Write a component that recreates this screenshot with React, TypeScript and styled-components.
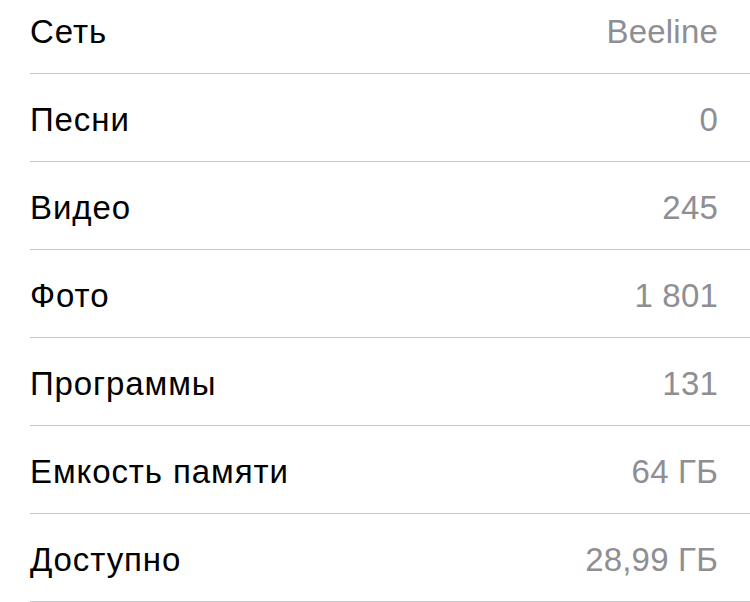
import React from 'react';
import styled, { createGlobalStyle } from 'styled-components';

const GlobalStyle = createGlobalStyle`
  html, body {
    margin: 0;
    padding: 0;
    background: #ffffff;
  }
  body {
    font-family: "Liberation Sans", Arial, sans-serif;
    -webkit-font-smoothing: antialiased;
  }
`;

const List = styled('div')`
  margin-top: -14px;
  background: #ffffff;
  width: 750px;
  overflow: hidden;
`;

const Row = styled('div')`
  box-sizing: border-box;
  display: flex;
  justify-content: space-between;
  align-items: center;
  height: 88px;
  margin-left: 30px;
  padding: 4px 32px 0 0;
  border-bottom: 1.5px solid #c8c7cc;
`;

const Label = styled('span')`
  font-size: 33px;
  color: #000000;
  letter-spacing: 0.9px;
`;

const Value = styled('span')`
  font-size: 33px;
  color: #8e8e93;
  letter-spacing: 0.2px;
`;

const items: [string, string][] = [
  ['Сеть', 'Beeline'],
  ['Песни', '0'],
  ['Видео', '245'],
  ['Фото', '1 801'],
  ['Программы', '131'],
  ['Емкость памяти', '64 ГБ'],
  ['Доступно', '28,99 ГБ'],
];

const App: React.FC = () => {
  return (
    <>
      <GlobalStyle />
      <List>
        {items.map(([label, value]) => (
          <Row key={label}>
            <Label>{label}</Label>
            <Value>{value}</Value>
          </Row>
        ))}
      </List>
    </>
  );
};

export default App;
